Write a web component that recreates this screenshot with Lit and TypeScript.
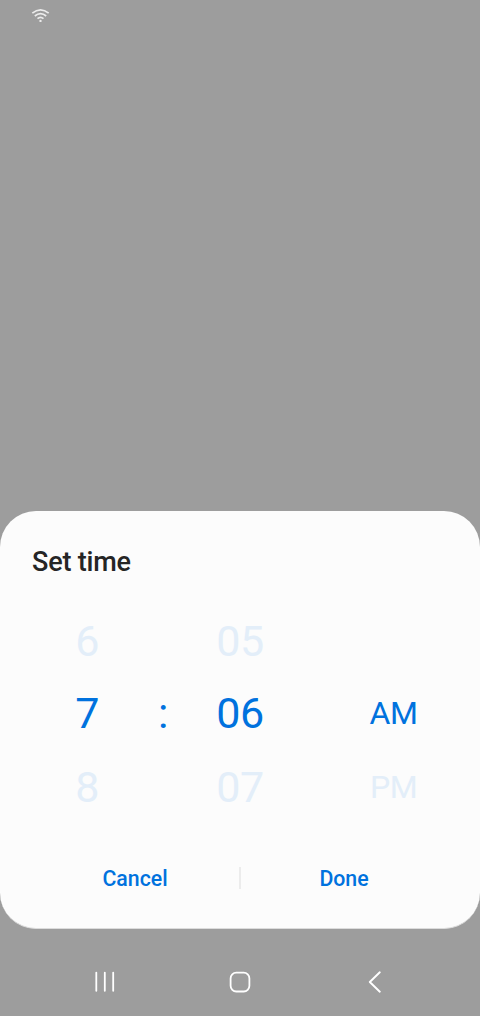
import { LitElement, html, css } from "lit";
import { customElement, property } from "lit/decorators.js";

@customElement("time-column")
class TimeColumn extends LitElement {
  @property({ type: Array }) values: string[] = [];
  static styles = css`
    :host { display: grid; grid-template-rows: 72px 72px 76px; justify-items: center; align-items: center; }
    .value { color: #e3eef9; white-space: pre; }
    .selected { color: #0072de; }
  `;
  render() {
    return this.values.map((v, i) => html`<span class="value ${i === 1 ? "selected" : ""}">${v}</span>`);
  }
}

@customElement("app-root")
class AppRoot extends LitElement {
  static styles = css`
    :host { display: flex; flex-direction: column; height: 1016px; background: #9d9d9d; font-family: Roboto, sans-serif; overflow: hidden; }
    .status { flex: 0 0 511px; padding: 8px 0 0 31px; box-sizing: border-box; }
    svg { display: block; }
    .sheet { flex: 0 0 418px; box-sizing: border-box; background: #fcfcfc; border-radius: 36px; display: flex; flex-direction: column; border-bottom: 1px solid #dcdcdc; }
    h1 { margin: 35px 0 0 32px; height: 30px; font-size: 27px; line-height: 32px; font-weight: 500; letter-spacing: -0.2px; color: #252525; }
    .picker { margin-top: 29px; height: 220px; display: grid; grid-template-columns: 145px 36px 118px 1fr; font-size: 43px; line-height: 50px; letter-spacing: -0.5px; font-weight: 400; }
    .hours { padding-left: 29px; }
    .colon { color: #0072de; height: 50px; margin-top: 83px; text-align: center; }
    .meridiem { font-size: 32px; letter-spacing: -0.5px; padding-left: 8px; }
    .actions { margin-top: 28px; height: 50px; display: grid; grid-template-columns: 1fr 2px 1fr; align-items: center; }
    button { border: 0; background: none; padding: 2px 0 0; font: 500 21.3px/26px Roboto, sans-serif; color: #0072de; text-align: center; }
    .cancel { padding-left: 31px; }
    .done { padding-right: 33px; }
    .divider { height: 22px; background: #ececec; }
    .nav { flex: 1; display: grid; grid-template-columns: 135px 135px 135px; justify-content: center; justify-items: center; padding-top: 42px; }
  `;
  render() {
    return html`
      <div class="status">
        <svg width="19" height="15" viewBox="0 0 19 15" fill="none" stroke="#ececec" stroke-width="1.7">
          <path d="M1.3 5.2Q9.5-1.4 17.7 5.2M3.8 8Q9.5 3.3 15.2 8M6.5 10.7Q9.5 8.1 12.5 10.7" />
          <circle cx="9.5" cy="12.9" r="1.2" fill="#ececec" stroke="none" />
        </svg>
      </div>
      <section class="sheet">
        <h1>Set time</h1>
        <div class="picker">
          <time-column class="hours" .values=${["6", "7", "8"]}></time-column>
          <span class="colon">:</span>
          <time-column .values=${["05", "06", "07"]}></time-column>
          <time-column class="meridiem" .values=${["", "AM", "PM"]}></time-column>
        </div>
        <div class="actions">
          <button class="cancel">Cancel</button>
          <span class="divider"></span>
          <button class="done">Done</button>
        </div>
      </section>
      <nav class="nav">
        <svg width="24" height="24" viewBox="0 0 24 24" stroke="#fff" stroke-width="1.8" stroke-linecap="round">
          <path d="M3.3 1.6V19.8M11.8 1.6V19.8M20.2 1.6V19.8" />
        </svg>
        <svg width="24" height="24" viewBox="0 0 24 24" fill="none" stroke="#fff" stroke-width="1.8">
          <rect x="2.6" y="1.7" width="18.8" height="18.8" rx="5.7" />
        </svg>
        <svg width="24" height="24" viewBox="0 0 24 24" fill="none" stroke="#fff" stroke-width="1.9" stroke-linecap="round" stroke-linejoin="round">
          <path d="M16.8 1.3L6.8 11L16.8 20.7" />
        </svg>
      </nav>
    `;
  }
}
